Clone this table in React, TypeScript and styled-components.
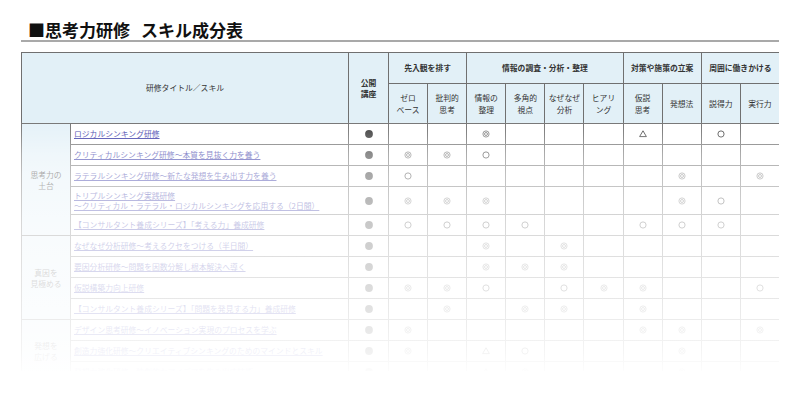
import React from "react";
import styled, { createGlobalStyle } from "styled-components";

type Mark = "W" | "O" | "T" | "-";

interface CourseRow {
  title: string[];
  marks: string;
  tall?: boolean;
}

interface CourseGroup {
  name: string[];
  rows: CourseRow[];
}

const GlobalStyle = createGlobalStyle`
  body {
    margin: 0;
    background: #ffffff;
    font-family: "Noto Sans CJK JP", "Noto Sans", sans-serif;
    color: #333333;
  }
`;

// ページ全体
const Page = styled.div`
  width: 800px;
  height: 395px;
  box-sizing: border-box;
  padding: 20px 21px 0;
  overflow: hidden;
`;

// 見出し
const Title = styled.h1`
  margin: 0;
  padding-left: 7px;
  font-size: 17px;
  line-height: 20px;
  font-weight: 700;
  color: #111111;
  border-bottom: 2px solid #a9a9a9;
`;

const TitleGap = styled.span`
  display: inline-block;
  width: 11px;
`;

// 表の枠（下側は切れて消えていく）
const TableWrap = styled.div`
  position: relative;
  margin-top: 10px;
  height: 319px;
  overflow: hidden;
`;

const Fade = styled.div`
  position: absolute;
  left: 0;
  right: 0;
  top: 70px;
  bottom: 0;
  pointer-events: none;
  background: linear-gradient(
    to bottom,
    rgba(255, 255, 255, 0.05) 0px,
    rgba(255, 255, 255, 0.14) 10px,
    rgba(255, 255, 255, 0.42) 32px,
    rgba(255, 255, 255, 0.56) 53px,
    rgba(255, 255, 255, 0.72) 100px,
    rgba(255, 255, 255, 0.8) 150px,
    rgba(255, 255, 255, 0.87) 200px,
    rgba(255, 255, 255, 0.93) 230px,
    rgba(255, 255, 255, 0.99) 250px
  );
`;

const Table = styled.table`
  width: 758px;
  border-collapse: collapse;
  table-layout: fixed;
  font-size: 7.8px;
`;

const Col = styled.col<{ $w: number }>`
  width: ${(p) => p.$w}px;
`;

const HeadCell = styled.th<{ $bold?: boolean; $h?: number }>`
  background: #e2f0f7;
  border: 1px solid #707070;
  padding: 0;
  height: ${(p) => p.$h ?? 30}px;
  font-weight: ${(p) => (p.$bold ? 700 : 400)};
  line-height: 11.5px;
  color: #333333;
  text-align: center;
  vertical-align: middle;
  white-space: pre-line;
`;

const BodyRow = styled.tr<{ $tall?: boolean }>`
  height: ${(p) => (p.$tall ? 28 : 21)}px;
`;

const CategoryCell = styled.td`
  background: #e4f1f8;
  border: 1px solid #707070;
  text-align: center;
  vertical-align: middle;
  line-height: 11px;
  color: #444444;
  white-space: pre-line;
  padding: 0;
`;

const TitleCell = styled.td`
  border: 1px solid #707070;
  padding: 0 3px;
  line-height: 10px;
  vertical-align: middle;
  white-space: nowrap;
  overflow: hidden;
`;

const CourseLink = styled.a`
  color: #3a3aa8;
  text-decoration: underline;
  display: block;
`;

const MarkCell = styled.td`
  border: 1px solid #707070;
  padding: 0;
  text-align: center;
  vertical-align: middle;
  line-height: 0;
`;

const skillGroups: { name: string; span: number }[] = [
  { name: "先入観を排す", span: 2 },
  { name: "情報の調査・分析・整理", span: 4 },
  { name: "対策や施策の立案", span: 2 },
  { name: "周囲に働きかける", span: 2 },
];

const skills = [
  "ゼロ\nベース",
  "批判的\n思考",
  "情報の\n整理",
  "多角的\n視点",
  "なぜなぜ\n分析",
  "ヒアリ\nング",
  "仮説\n思考",
  "発想法",
  "説得力",
  "実行力",
];

const groups: CourseGroup[] = [
  {
    name: ["思考力の", "土台"],
    rows: [
      { title: ["ロジカルシンキング研修"], marks: "--W---T-O-" },
      { title: ["クリティカルシンキング研修～本質を見抜く力を養う"], marks: "WWO-------" },
      { title: ["ラテラルシンキング研修～新たな発想を生み出す力を養う"], marks: "O------W-W" },
      {
        title: [
          "トリプルシンキング実践研修",
          "～クリティカル・ラテラル・ロジカルシンキングを応用する（2日間）",
        ],
        marks: "WWW----WO-",
        tall: true,
      },
      { title: ["【コンサルタント養成シリーズ】「考える力」養成研修"], marks: "OOOO--OOO-" },
    ],
  },
  {
    name: ["真因を", "見極める"],
    rows: [
      { title: ["なぜなぜ分析研修～考えるクセをつける（半日間）"], marks: "--W-W-----" },
      { title: ["要因分析研修～問題を因数分解し根本解決へ導く"], marks: "--WWW-----" },
      { title: ["仮説構築力向上研修"], marks: "WWO-OWW--O" },
      { title: ["【コンサルタント養成シリーズ】「問題を発見する力」養成研修"], marks: "-W-WW-W---" },
    ],
  },
  {
    name: ["発想を", "広げる"],
    rows: [
      { title: ["デザイン思考研修～イノベーション実現のプロセスを学ぶ"], marks: "W-----WW-W" },
      { title: ["創造力強化研修～クリエイティブシンキングのためのマインドとスキル"], marks: "W-TO---W--" },
      { title: ["発想力強化研修～独創的なアイデアを生み出す技術"], marks: "--TW---W--" },
    ],
  },
];

// ●◎○△ の記号
const Symbol = ({ kind }: { kind: Mark | "dot" }) => {
  if (kind === "-") return null;
  return (
    <svg width="10" height="10" viewBox="0 0 10 10">
      {kind === "dot" && <circle cx="5" cy="5" r="3.9" fill="#3a3a3a" />}
      {kind === "O" && <circle cx="5" cy="5" r="3.1" fill="none" stroke="#3f3f3f" strokeWidth="0.9" />}
      {kind === "W" && (
        <g fill="none" stroke="#6a6a6a" strokeWidth="0.8">
          <circle cx="5" cy="5" r="3.1" />
          <circle cx="5" cy="5" r="1.5" />
        </g>
      )}
      {kind === "T" && (
        <polygon points="5,1.8 8.4,7.6 1.6,7.6" fill="none" stroke="#3f3f3f" strokeWidth="0.9" />
      )}
    </svg>
  );
};

export default function App() {
  return (
    <Page>
      <GlobalStyle />
      <Title>
        ■思考力研修<TitleGap />スキル成分表
      </Title>
      <TableWrap>
        <Table>
          <colgroup>
            <Col $w={49} />
            <Col $w={278} />
            <Col $w={40} />
            {skills.map((s) => (
              <Col key={s} $w={39.1} />
            ))}
          </colgroup>
          <thead>
            <tr>
              <HeadCell colSpan={2} rowSpan={2}>
                研修タイトル／スキル
              </HeadCell>
              <HeadCell rowSpan={2} $bold>
                {"公開\n講座"}
              </HeadCell>
              {skillGroups.map((g) => (
                <HeadCell key={g.name} colSpan={g.span} $bold>
                  {g.name}
                </HeadCell>
              ))}
            </tr>
            <tr>
              {skills.map((s) => (
                <HeadCell key={s} $h={39}>
                  {s}
                </HeadCell>
              ))}
            </tr>
          </thead>
          <tbody>
            {groups.map((g) =>
              g.rows.map((r, i) => (
                <BodyRow key={r.title[0]} $tall={r.tall}>
                  {i === 0 && <CategoryCell rowSpan={g.rows.length}>{g.name.join("\n")}</CategoryCell>}
                  <TitleCell>
                    <CourseLink href="#">
                      {r.title.map((t) => (
                        <div key={t}>{t}</div>
                      ))}
                    </CourseLink>
                  </TitleCell>
                  <MarkCell>
                    <Symbol kind="dot" />
                  </MarkCell>
                  {r.marks.split("").map((m, j) => (
                    <MarkCell key={j}>
                      <Symbol kind={m as Mark} />
                    </MarkCell>
                  ))}
                </BodyRow>
              ))
            )}
          </tbody>
        </Table>
        <Fade />
      </TableWrap>
    </Page>
  );
}
